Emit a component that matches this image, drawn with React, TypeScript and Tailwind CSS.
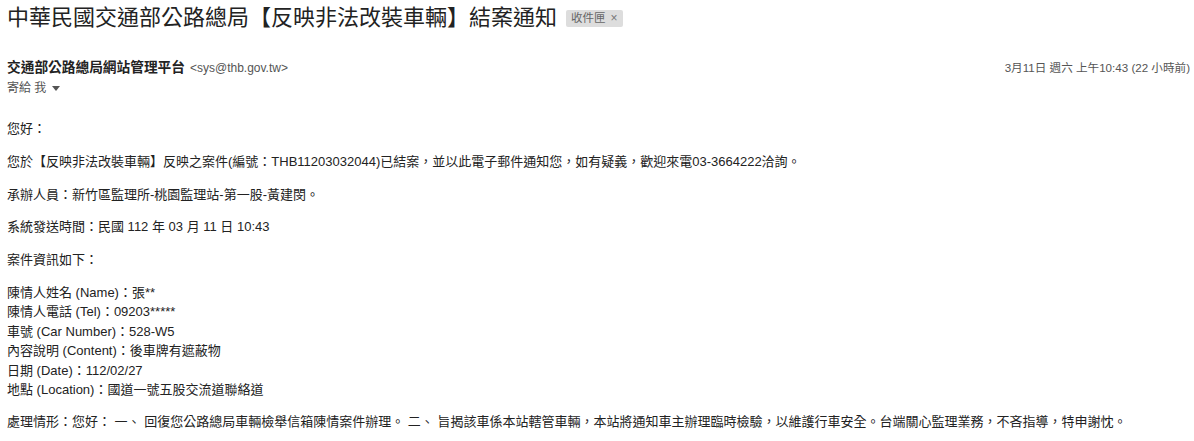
import React from 'react';

const font = { fontFamily: '"Liberation Sans", Arial, "Noto Sans CJK TC", sans-serif' };

const details = [
  '陳情人姓名 (Name)：張**',
  '陳情人電話 (Tel)：09203*****',
  '車號 (Car Number)：528-W5',
  '內容說明 (Content)：後車牌有遮蔽物',
  '日期 (Date)：112/02/27',
  '地點 (Location)：國道一號五股交流道聯絡道',
];

const App: React.FC = () => {
  return (
    <div className="w-[1194px] h-[441px] bg-white overflow-hidden text-[#222]" style={font}>
      {/* subject */}
      <div className="flex items-center pl-[7px] pt-[4px] h-[32px]">
        <h1 className="text-[22px] leading-[28px] text-[#222] font-normal">
          中華民國交通部公路總局【反映非法改裝車輛】結案通知
        </h1>
        <span className="ml-[9px] mt-[1px] flex items-center gap-[5px] bg-[#dddddd] text-[#666] text-[11.5px] leading-[17px] px-[5px] rounded-[2px]">
          收件匣
          <span className="text-[12px] text-[#777]">×</span>
        </span>
      </div>

      {/* sender */}
      <div className="flex items-start justify-between pl-[7px] pr-[4px] pt-[27px]">
        <div>
          <div className="flex items-baseline">
            <span className="text-[13.7px] font-bold text-[#222] leading-[18px]">交通部公路總局網站管理平台</span>
            <span className="ml-[5px] text-[12px] text-[#555]">&lt;sys@thb.gov.tw&gt;</span>
          </div>
          <div className="flex items-center text-[12px] text-[#555] leading-[18px] mt-[2px]">
            寄給 我
            <svg className="ml-[6px]" width="8" height="5" viewBox="0 0 8 5">
              <path d="M0 0 L8 0 L4 5 Z" fill="#555" />
            </svg>
          </div>
        </div>
        <div className="text-[11.6px] text-[#555] leading-[18px]">3月11日 週六 上午10:43 (22 小時前)</div>
      </div>

      {/* body */}
      <div className="pl-[7px] pt-[22px] text-[13px] leading-[19.4px] text-[#222]">
        <p>您好：</p>
        <p className="mt-[13.4px]">
          您於【反映非法改裝車輛】反映之案件(編號：THB11203032044)已結案，並以此電子郵件通知您，如有疑義，歡迎來電03-3664222洽詢。
        </p>
        <p className="mt-[13.4px]">承辦人員：新竹區監理所-桃園監理站-第一股-黃建閔。</p>
        <p className="mt-[13.4px]">系統發送時間：民國 112 年 03 月 11 日 10:43</p>
        <p className="mt-[13.4px]">案件資訊如下：</p>
        <div className="mt-[13.4px]">
          {details.map((d) => (
            <p key={d}>{d}</p>
          ))}
        </div>
        <p className="mt-[12.6px]">
          處理情形：您好： 一、 回復您公路總局車輛檢舉信箱陳情案件辦理。 二、 旨揭該車係本站轄管車輛，本站將通知車主辦理臨時檢驗，以維護行車安全。台端關心監理業務，不吝指導，特申謝忱。
        </p>
      </div>
    </div>
  );
};

export default App;
